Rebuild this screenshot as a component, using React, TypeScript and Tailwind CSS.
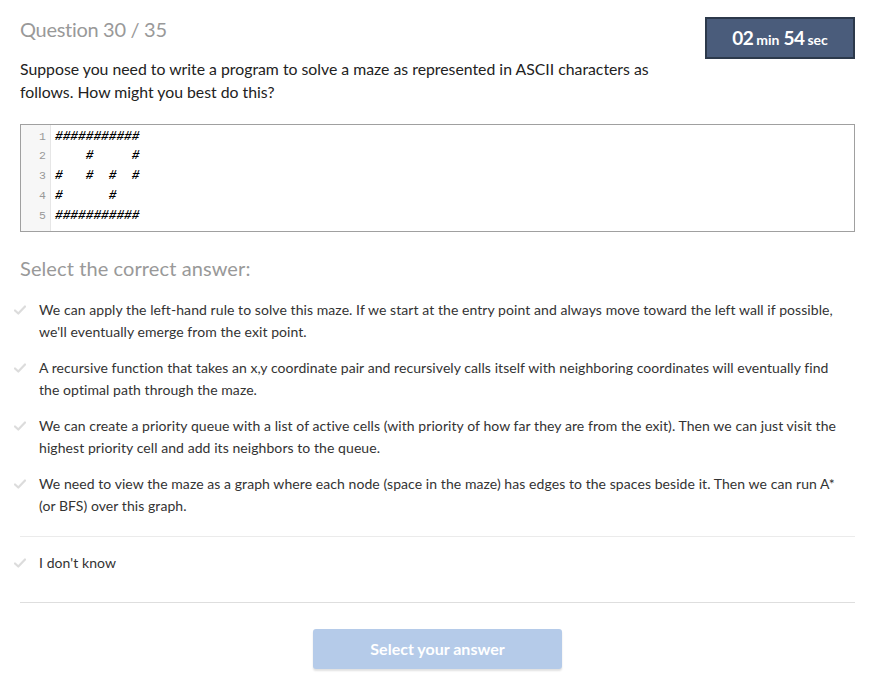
import React from "react";

const answers = [
  "We can apply the left-hand rule to solve this maze. If we start at the entry point and always move toward the left wall if possible, we'll eventually emerge from the exit point.",
  "A recursive function that takes an x,y coordinate pair and recursively calls itself with neighboring coordinates will eventually find the optimal path through the maze.",
  "We can create a priority queue with a list of active cells (with priority of how far they are from the exit). Then we can just visit the highest priority cell and add its neighbors to the queue.",
  "We need to view the maze as a graph where each node (space in the maze) has edges to the spaces beside it. Then we can run A* (or BFS) over this graph.",
];

const maze = [
  "###########",
  "    #     #",
  "#   #  #  #",
  "#      #",
  "###########",
];

const CheckIcon = () => (
  <svg width="12" height="10" viewBox="0 0 12 10" className="shrink-0 mt-[6px]">
    <path d="M1 5.5 L4.3 8.5 L11 1.5" fill="none" stroke="#dcdcdc" strokeWidth="2.2" strokeLinecap="round" strokeLinejoin="round" />
  </svg>
);

const Answer = ({ text }: { text: string }) => (
  <div className="flex items-start gap-[13px] py-[7px] -ml-[6px]">
    <CheckIcon />
    <p className="text-[14px] leading-[22px] text-[#333] tracking-[0.07px] pr-4">{text}</p>
  </div>
);

export default function App() {
  return (
    <div className="bg-white min-h-screen pl-5 pr-[17px] pt-[17px] font-['Lato',sans-serif]">
      {/* Header */}
      <div className="flex items-start justify-between">
        <h1 className="text-[20px] leading-[28px] text-[#999] -mt-[2px] tracking-[-0.3px]">
          Question 30 / 35
        </h1>
        <div className="w-[150px] h-[42px] bg-[#4a5c7b] border-2 border-[#2c394b] flex items-center justify-center text-white font-bold">
          <span className="text-[19px] tracking-[-0.5px]">02</span>
          <span className="text-[14px] ml-[3px] mr-[4px] mt-[2px]">min</span>
          <span className="text-[19px] tracking-[-0.5px]">54</span>
          <span className="text-[14px] ml-[3px] mt-[2px]">sec</span>
        </div>
      </div>

      {/* Question */}
      <p className="text-[15.8px] leading-[23px] text-[#222] max-w-[670px] -mt-[2px]">
        Suppose you need to write a program to solve a maze as represented in ASCII characters as follows. How might you best do this?
      </p>

      {/* Code box */}
      <div className="mt-[20.5px] border border-[#a0a0a0] flex h-[108px]">
        <div className="w-[30px] bg-[#f7f7f7] border-r border-[#e6e6e6] pt-[2px] text-right pr-[4px]">
          {maze.map((_, i) => (
            <div key={i} className="text-[11.5px] leading-[19.75px] text-[#999] font-['Liberation_Mono',monospace]">
              {i + 1}
            </div>
          ))}
        </div>
        <div className="pt-[2px] pl-[4px]">
          {maze.map((line, i) => (
            <pre key={i} className="text-[12.8px] leading-[19.75px] text-black font-bold font-['Liberation_Mono',monospace] italic">
              {line}
            </pre>
          ))}
        </div>
      </div>

      {/* Answers */}
      <h2 className="mt-[23px] text-[20px] leading-[26px] text-[#999] tracking-[0.1px]">
        Select the correct answer:
      </h2>
      <div className="mt-[11px]">
        {answers.map((a, i) => (
          <Answer key={i} text={a} />
        ))}
      </div>
      <div className="mt-[12px] border-t border-[#ebebeb]" />
      <div className="mt-[8px]">
        <Answer text="I don't know" />
      </div>
      <div className="mt-[21px] border-t border-[#dedede]" />

      {/* Submit */}
      <div className="flex justify-center pt-[26px]">
        <button className="w-[249px] h-[40px] rounded-[3px] bg-[#b5cbe9] text-white text-[16px] font-bold shadow-[0_2px_2px_rgba(0,0,0,0.12)]">
          Select your answer
        </button>
      </div>
    </div>
  );
}
